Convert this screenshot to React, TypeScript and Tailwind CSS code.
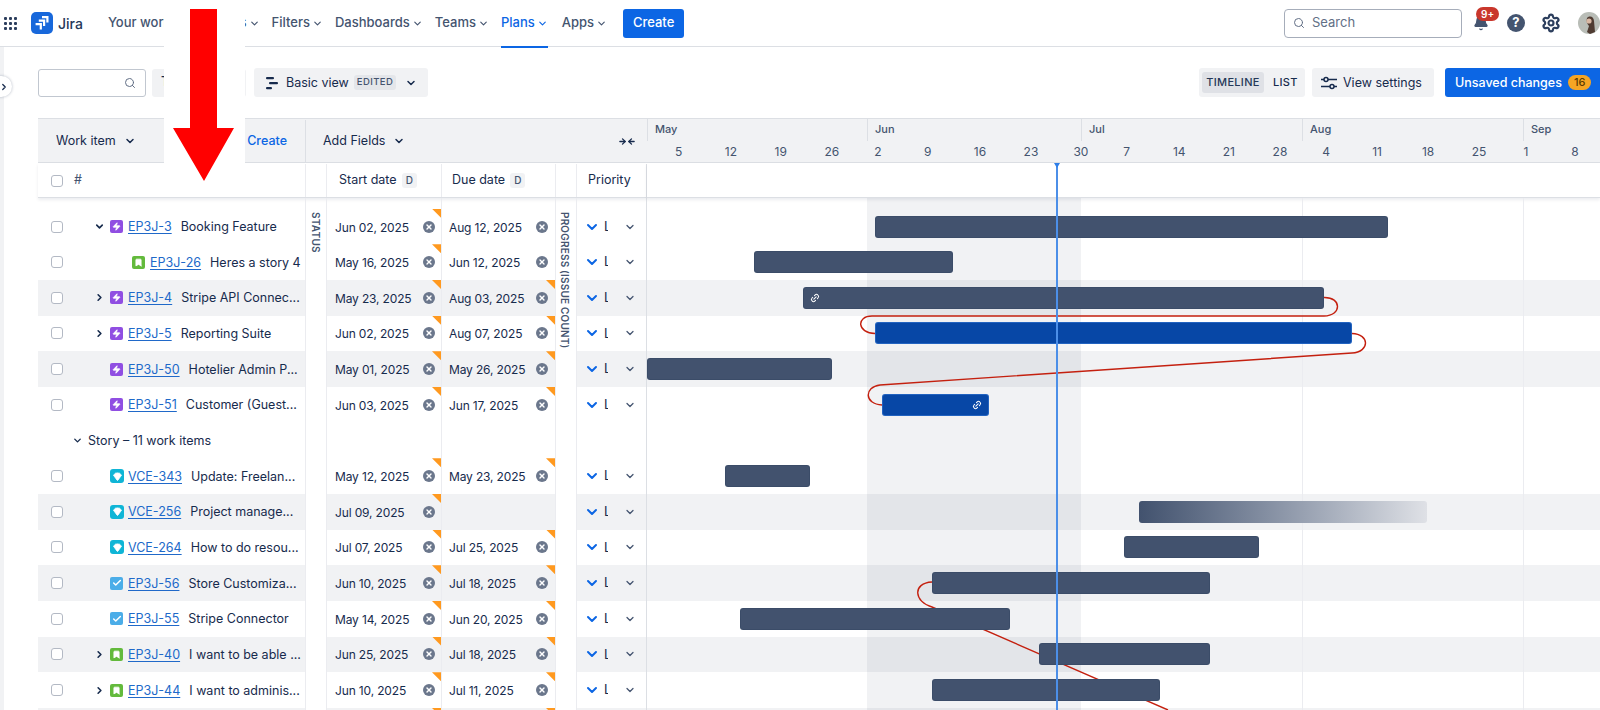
import {
  ArrowLeft,
  ArrowRight,
  Bell,
  Bookmark,
  Check,
  ChevronDown,
  ChevronRight,
  Gem,
  Link2,
  Search,
  Settings,
  X,
  Zap,
} from "lucide-react"

type Kind = "epic" | "story" | "gem" | "task"

type Row = {
  id: string
  title: string
  kind: Kind
  start: string
  due?: string
  startFlag?: boolean
  dueFlag?: boolean
  caret?: "open" | "closed"
  deep?: boolean
  band?: boolean
  bar: { left: number; width: number; tone?: "blue" | "fade"; link?: "start" | "end" }
}

const rows: Row[] = [
  { id: "EP3J-3", title: "Booking Feature", kind: "epic", start: "Jun 02, 2025", due: "Aug 12, 2025", startFlag: true, caret: "open", bar: { left: 228, width: 513 } },
  { id: "EP3J-26", title: "Heres a story 4", kind: "story", start: "May 16, 2025", due: "Jun 12, 2025", startFlag: true, deep: true, bar: { left: 107, width: 199 } },
  { id: "EP3J-4", title: "Stripe API Connec...", kind: "epic", start: "May 23, 2025", due: "Aug 03, 2025", startFlag: true, dueFlag: true, caret: "closed", band: true, bar: { left: 156, width: 521, link: "start" } },
  { id: "EP3J-5", title: "Reporting Suite", kind: "epic", start: "Jun 02, 2025", due: "Aug 07, 2025", startFlag: true, dueFlag: true, caret: "closed", bar: { left: 228, width: 477, tone: "blue" } },
  { id: "EP3J-50", title: "Hotelier Admin P...", kind: "epic", start: "May 01, 2025", due: "May 26, 2025", startFlag: true, dueFlag: true, band: true, bar: { left: 0, width: 185 } },
  { id: "EP3J-51", title: "Customer (Guest...", kind: "epic", start: "Jun 03, 2025", due: "Jun 17, 2025", startFlag: true, dueFlag: true, bar: { left: 235, width: 107, tone: "blue", link: "end" } },
]

const storyRows: Row[] = [
  { id: "VCE-343", title: "Update: Freelan...", kind: "gem", start: "May 12, 2025", due: "May 23, 2025", startFlag: true, dueFlag: true, bar: { left: 78, width: 85 } },
  { id: "VCE-256", title: "Project manage...", kind: "gem", start: "Jul 09, 2025", startFlag: true, band: true, bar: { left: 492, width: 288, tone: "fade" } },
  { id: "VCE-264", title: "How to do resou...", kind: "gem", start: "Jul 07, 2025", due: "Jul 25, 2025", startFlag: true, dueFlag: true, bar: { left: 477, width: 135 } },
  { id: "EP3J-56", title: "Store Customiza...", kind: "task", start: "Jun 10, 2025", due: "Jul 18, 2025", startFlag: true, dueFlag: true, band: true, bar: { left: 285, width: 278 } },
  { id: "EP3J-55", title: "Stripe Connector", kind: "task", start: "May 14, 2025", due: "Jun 20, 2025", startFlag: true, dueFlag: true, bar: { left: 93, width: 270 } },
  { id: "EP3J-40", title: "I want to be able ...", kind: "story", start: "Jun 25, 2025", due: "Jul 18, 2025", startFlag: true, dueFlag: true, caret: "closed", band: true, bar: { left: 392, width: 171 } },
  { id: "EP3J-44", title: "I want to adminis...", kind: "story", start: "Jun 10, 2025", due: "Jul 11, 2025", startFlag: true, dueFlag: true, caret: "closed", bar: { left: 285, width: 228 } },
]

const months = [
  { name: "May", width: "w-[220px]" },
  { name: "Jun", width: "w-[214px]" },
  { name: "Jul", width: "w-[221px]" },
  { name: "Aug", width: "w-[221px]" },
  { name: "Sep", width: "w-[77px]" },
]
const weeks = [5, 12, 19, 26, 2, 9, 16, 23, 30, 7, 14, 21, 28, 4, 11, 18, 25, 1, 8]
const nav = ["Your work", "Projects", "Filters", "Dashboards", "Teams"]

const line = "border-r border-[#ebecf0]"

function IssueIcon({ kind }: { kind: Kind }) {
  if (kind === "epic")
    return (
      <span className="flex h-[13px] w-[13px] shrink-0 items-center justify-center rounded-[2px] bg-[#904ee2]">
        <Zap size={9} className="fill-white text-white" />
      </span>
    )
  if (kind === "story")
    return (
      <span className="flex h-[13px] w-[13px] shrink-0 items-center justify-center rounded-[2px] bg-[#63ba3c]">
        <Bookmark size={9} className="fill-white text-white" />
      </span>
    )
  if (kind === "gem")
    return (
      <span className="-mr-px flex h-[14px] w-[14px] shrink-0 items-center justify-center rounded-[3px] bg-[#0fb5d6]">
        <Gem size={9} className="fill-white text-white" />
      </span>
    )
  return (
    <span className="flex h-[13px] w-[13px] shrink-0 items-center justify-center rounded-[2px] bg-[#4bade8]">
      <Check size={10} strokeWidth={3.5} className="text-white" />
    </span>
  )
}

function Flag() {
  return <span className="absolute right-0 top-0 h-[9px] w-[9px] bg-[#ff991f] [clip-path:polygon(0_0,100%_0,100%_100%)]" />
}

function Clear() {
  return (
    <span className="flex h-3 w-3 shrink-0 items-center justify-center rounded-full bg-[#6b778c]">
      <X size={8} strokeWidth={4} className="text-white" />
    </span>
  )
}

function Checkbox() {
  return <span className="h-3 w-3 shrink-0 rounded-[3px] border border-[#b3b9c4] bg-white" />
}

function DateCell({ value, flag, width, pad }: { value?: string; flag?: boolean; width: string; pad: string }) {
  return (
    <div className={`relative flex shrink-0 items-center justify-between ${width} ${pad} ${line}`}>
      {flag && <Flag />}
      {value && <span className="pt-[2px] text-[12px] tracking-[-0.15px] text-[#172b4d]">{value}</span>}
      {value && <Clear />}
    </div>
  )
}

function TableRow({ row }: { row: Row }) {
  const bg = row.band ? "bg-[#f1f2f4]" : "bg-white"
  return (
    <div className="flex h-[35.67px]">
      <div className={`flex w-[268px] shrink-0 items-center whitespace-nowrap pl-[13px] ${bg} ${line}`}>
        <Checkbox />
        <span className={`flex shrink-0 justify-end pr-[5px] ${row.deep ? "w-[69px]" : "w-[47px]"}`}>
          {row.caret === "open" && <ChevronDown size={11} strokeWidth={3.5} className="text-[#172b4d]" />}
          {row.caret === "closed" && <ChevronRight size={11} strokeWidth={3.5} className="text-[#172b4d]" />}
        </span>
        <IssueIcon kind={row.kind} />
        <a className="ml-[5px] pt-[2px] text-[12.5px] text-[#2069c9] underline underline-offset-2">{row.id}</a>
        <span className="ml-[9px] pt-[2px] text-[12.5px] text-[#172b4d]">{row.title}</span>
      </div>
      <div className={`w-[21px] shrink-0 bg-white ${line}`} />
      <div className={`flex shrink-0 ${bg}`}>
        <DateCell value={row.start} flag={row.startFlag} width="w-[115px]" pad="pl-[8px] pr-[6px]" />
        <DateCell value={row.due} flag={row.dueFlag} width="w-[114px]" pad="pl-[7px] pr-[7px]" />
      </div>
      <div className={`w-[21px] shrink-0 bg-white ${line}`} />
      <PriorityCell bg={bg} />
    </div>
  )
}

function PriorityCell({ bg }: { bg: string }) {
  return (
    <div className={`flex w-[70px] shrink-0 items-center border-r border-[#dcdfe4] pl-[7px] ${bg}`}>
      <ChevronDown size={16} strokeWidth={3} className="text-[#0c66e4]" />
      <span className="ml-[4px] w-[4px] overflow-hidden text-[13px] text-[#172b4d]">L</span>
      <ChevronDown size={12} strokeWidth={2.5} className="ml-[16px] text-[#44546f]" />
    </div>
  )
}

function EmptyCols() {
  return (
    <>
      <div className={`w-[21px] shrink-0 ${line}`} />
      <div className={`w-[115px] shrink-0 ${line}`} />
      <div className={`w-[114px] shrink-0 ${line}`} />
      <div className={`w-[21px] shrink-0 ${line}`} />
      <div className="w-[70px] shrink-0 border-r border-[#dcdfe4]" />
    </>
  )
}

function GroupRow() {
  return (
    <div className="flex h-[35.67px]">
      <div className={`flex w-[268px] shrink-0 items-center pl-[34px] ${line}`}>
        <ChevronDown size={11} strokeWidth={3} className="text-[#172b4d]" />
        <span className="ml-[5px] pt-[2px] text-[12.5px] text-[#172b4d]">Story – 11 work items</span>
      </div>
      <EmptyCols />
    </div>
  )
}

function Spacer() {
  return (
    <div className="flex h-[10.7px]">
      <div className={`w-[268px] shrink-0 ${line}`} />
      <EmptyCols />
    </div>
  )
}

function Bar({ bar }: { bar: Row["bar"] }) {
  const tone =
    bar.tone === "blue"
      ? "border bg-[#0747a6] border-[#4c8fe8]/40"
      : bar.tone === "fade"
        ? "bg-gradient-to-r from-[#42526e] to-[#dfe1e6]"
        : "border bg-[#42526e] border-[#2c3e5d]/30"
  return (
    <div
      className={`relative z-20 flex h-[22px] items-center rounded-[3px] px-[6px] ${tone} ${bar.link === "end" ? "justify-end" : ""}`}
      style={{ marginLeft: bar.left, width: bar.width }}
    >
      {bar.link && <Link2 size={10} strokeWidth={2.5} className="-rotate-45 text-white" />}
    </div>
  )
}

function Timeline() {
  const all = [...rows, null, ...storyRows, "end" as const]
  return (
    <div className="relative min-w-0 flex-1">
      <div className="h-[45px] border-b border-t border-[#dcdfe4] bg-[#f1f2f4]">
        <div className="flex h-[24px]">
          {months.map((m) => (
            <div key={m.name} className={`h-[22px] shrink-0 border-l border-[#dcdfe4] pl-[7px] pt-[2px] text-[11px] font-medium text-[#44546f] ${m.width}`}>
              {m.name}
            </div>
          ))}
        </div>
        <div className="flex pl-[28px] text-[12px] text-[#44546f]">
          {weeks.map((w, i) => (
            <span key={i} className={`w-[49.8px] shrink-0 ${w === 1 ? "pl-[2px]" : ""}`}>{w}</span>
          ))}
        </div>
      </div>
      <div className="h-[35px] border-b border-[#dcdfe4] bg-white shadow-[0_2px_3px_rgba(9,30,66,0.08)]" />
      <div className="relative pt-[10.7px]">
        {/* current month + month boundaries */}
        <div className="absolute inset-y-0 left-[220px] w-[214px] bg-[#091e42]/[0.06]" />
        <div className="absolute inset-y-0 left-[655px] w-px bg-[#ebecf0]" />
        <div className="absolute inset-y-0 left-[876px] w-px bg-[#ebecf0]" />
        <svg className="absolute left-0 top-0 z-10 h-[512px] w-[953px]" viewBox="647 198 953 512" fill="none" stroke="#c4200f" strokeWidth="1.4">
          <path d="M1324 297.5 C1342 297 1342 316 1324 316 L872 316 C856 316 857 333 875 333.5" />
          <path d="M1352 333.5 C1370 334 1370 352 1352 353 L880 385 C864 387 864 404 882 405" />
          <path d="M932 582 C912 583 914 602 932 607 L1168 710" />
        </svg>
        {all.map((r, i) =>
          r && r !== "end" ? (
            <div key={r.id} className={`flex h-[35.67px] items-center ${r.band ? "bg-[#f1f2f4]" : ""}`}>
              <Bar bar={r.bar} />
            </div>
          ) : (
            <div key={i} className={`h-[35.67px] ${r === "end" ? "bg-[#f1f2f4]" : ""}`} />
          ),
        )}
      </div>
      <div className="absolute bottom-0 left-[409px] top-[45px] z-30 w-[2px] bg-[#4c8fe8]" />
      <div className="absolute left-[407px] top-[45px] z-30 h-0 w-0 border-x-[3px] border-t-[5px] border-x-transparent border-t-[#2f7fe8]" />
    </div>
  )
}

function DateBadge() {
  return <span className="ml-[5px] rounded-[3px] bg-[#f1f2f4] px-[4px] text-[10px] font-medium text-[#44546f]">D</span>
}

function Table() {
  return (
    <div className="flex">
      <div className="relative w-[609px] shrink-0">
        <div className="flex h-[45px] items-center border-b border-t border-[#dcdfe4] bg-[#f1f2f4] pt-px text-[12.5px] text-[#172b4d]">
          <div className="flex h-full w-[268px] shrink-0 items-center border-r border-[#dcdfe4] pl-[18px]">
            <span>Work item</span>
            <ChevronDown size={12} strokeWidth={3} className="ml-[8px]" />
            <span className="ml-auto mr-[18px] font-medium text-[#0c66e4]">Create</span>
          </div>
          <div className="flex items-center pl-[17px]">
            <span>Add Fields</span>
            <ChevronDown size={12} strokeWidth={3} className="ml-[8px]" />
          </div>
          <div className="ml-auto mr-[11px] flex items-center">
            <ArrowRight size={9} strokeWidth={3.5} />
            <ArrowLeft size={9} strokeWidth={3.5} />
          </div>
        </div>
        <div className="flex h-[35px] border-b border-[#dcdfe4] bg-white pt-px text-[12.5px] text-[#172b4d] shadow-[0_2px_3px_rgba(9,30,66,0.08)]">
          <div className={`flex w-[268px] shrink-0 items-center pl-[13px] ${line}`}>
            <Checkbox />
            <span className="ml-[11px] text-[#44546f]">#</span>
          </div>
          <div className={`w-[21px] shrink-0 ${line}`} />
          <div className={`flex w-[115px] shrink-0 items-center pl-[12px] ${line}`}>
            Start date
            <DateBadge />
          </div>
          <div className={`flex w-[114px] shrink-0 items-center pl-[10px] ${line}`}>
            Due date
            <DateBadge />
          </div>
          <div className={`w-[21px] shrink-0 ${line}`} />
          <div className="flex w-[70px] shrink-0 items-center border-r border-[#dcdfe4] pl-[11px]">Priority</div>
        </div>
        <Spacer />
        {rows.map((r) => (
          <TableRow key={r.id} row={r} />
        ))}
        <GroupRow />
        {storyRows.map((r) => (
          <TableRow key={r.id} row={r} />
        ))}
        <TableRow row={{ ...storyRows[0], id: "", title: "", band: true, start: "", due: "", caret: undefined }} />
        <span className="absolute left-[270px] top-[94px] z-10 text-[10px] font-semibold tracking-[0.3px] text-[#44546f] [writing-mode:vertical-rl]">STATUS</span>
        <span className="absolute left-[519px] top-[94px] z-10 whitespace-nowrap text-[10px] font-semibold tracking-[0.2px] text-[#44546f] [writing-mode:vertical-rl]">PROGRESS (ISSUE COUNT)</span>
      </div>
      <Timeline />
    </div>
  )
}

function TopBar() {
  return (
    <header className="flex h-[47px] items-center border-b border-[#dcdfe4] bg-white text-[13px] font-medium text-[#44546f]">
      <div className="ml-[4px] grid grid-cols-3 gap-[2px]">
        {Array.from({ length: 9 }).map((_, i) => (
          <span key={i} className="h-[3px] w-[3px] rounded-[1px] bg-[#2c3e5d]" />
        ))}
      </div>
      <svg className="ml-[14px] shrink-0" width="22" height="22" viewBox="0 0 22 22">
        <rect width="22" height="22" rx="5" fill="#1868db" />
        <path d="M11 4h6.5v6.5h-2.2V6.2H11z M7.8 7.5h6.4v6.4H12V9.7H7.8z M4.6 11h6.3v6.4H8.7v-4.2H4.6z" fill="#fff" />
      </svg>
      <span className="ml-[5px] text-[14px] text-[#253858]">Jira</span>
      <nav className="ml-[25px] flex items-center gap-[12px]">
        {nav.map((n) => (
          <span key={n} className="flex items-center gap-[2px]">
            {n}
            <ChevronDown size={11} strokeWidth={2.5} />
          </span>
        ))}
        <span className="relative mr-[2px] flex h-[47px] items-center gap-[2px] text-[#0c66e4]">
          Plans
          <ChevronDown size={11} strokeWidth={2.5} />
          <span className="absolute -bottom-px left-0 right-0 h-[2px] bg-[#0c66e4]" />
        </span>
        <span className="flex items-center gap-[2px]">
          Apps
          <ChevronDown size={11} strokeWidth={2.5} />
        </span>
      </nav>
      <button className="ml-[16px] h-[29px] w-[61px] rounded-[3px] bg-[#0c66e4] text-[13px] font-medium text-white">Create</button>
      <div className="ml-auto flex h-[29px] w-[178px] items-center gap-[7px] rounded-[4px] border border-[#a6adba] pl-[8px] text-[13px] font-normal text-[#626f86]">
        <Search size={12} strokeWidth={2} />
        Search
      </div>
      <div className="relative ml-[12px] w-[24px]">
        <Bell size={16} className="ml-[-1px] fill-[#44546f] text-[#44546f]" />
        <span className="absolute -top-[8px] left-[2px] rounded-full bg-[#c9372c] px-[5px] text-[10px] font-semibold leading-[14px] text-white">9+</span>
      </div>
      <span className="ml-[9px] flex h-[18px] w-[18px] items-center justify-center rounded-full bg-[#44546f] text-[13px] font-bold text-white">?</span>
      <Settings size={20} strokeWidth={2.6} className="ml-[16px] text-[#2c3e5d]" />
      <svg className="ml-[17px] shrink-0" width="22" height="22" viewBox="0 0 22 22">
        <circle cx="11" cy="11" r="11" fill="#b9bdb7" />
        <path d="M9 6c3-3 7-1 7 3l1 11-5 2-3-2 2-6c-2-2-3-5-2-8z" fill="#4f3b32" />
        <circle cx="11" cy="9" r="2.6" fill="#d9b8a4" />
      </svg>
    </header>
  )
}

function Toolbar() {
  return (
    <div className="flex h-[71px] items-center pl-[34px] text-[12.5px] text-[#172b4d]">
      <div className="flex h-[28px] w-[108px] items-center justify-end rounded-[3px] border border-[#c1c7d0] pr-[9px] text-[#626f86]">
        <Search size={12} />
      </div>
      <div className="ml-[6px] flex h-[28px] w-[94px] items-center rounded-[3px] bg-[#f1f2f4] pl-[9px] font-medium">T</div>
      <div className="ml-[8px] flex h-[29px] w-[174px] items-center rounded-[3px] bg-[#f1f2f4] pl-[11px]">
        <svg width="14" height="14" viewBox="0 0 14 14" fill="#172b4d">
          <rect x="1" y="1" width="8" height="2.2" rx="1" />
          <rect x="4" y="6" width="9" height="2.2" rx="1" />
          <rect x="1" y="11" width="6" height="2.2" rx="1" />
        </svg>
        <span className="ml-[7px] pt-px">Basic view</span>
        <span className="ml-[5px] rounded-[3px] bg-[#e4e6ea] px-[3px] text-[9.5px] font-medium tracking-[0.4px] text-[#44546f]">EDITED</span>
        <ChevronDown size={12} strokeWidth={3} className="ml-[9px]" />
      </div>
      <div className="ml-auto flex h-[29px] w-[106px] items-center rounded-[3px] bg-[#f1f2f4] pl-[3px] text-[11px] font-medium tracking-[0.3px]">
        <span className="flex h-[21px] w-[62px] items-center justify-center rounded-[3px] bg-[#dfe1e6] text-[#253858]">TIMELINE</span>
        <span className="ml-[9px]">LIST</span>
      </div>
      <div className="ml-[7px] flex h-[29px] w-[122px] items-center rounded-[3px] bg-[#f1f2f4] pl-[9px]">
        <svg width="16" height="14" viewBox="0 0 16 14" fill="none" stroke="#172b4d" strokeWidth="1.5">
          <path d="M0 3.5h3M7 3.5h9M0 10.5h9M13 10.5h3" />
          <circle cx="5" cy="3.5" r="2" />
          <circle cx="11" cy="10.5" r="2" />
        </svg>
        <span className="ml-[6px] pt-px">View settings</span>
      </div>
      <div className="ml-[11px] flex h-[29px] w-[155px] items-center rounded-l-[3px] bg-[#0c66e4] pl-[10px] font-medium text-white">
        <span className="pt-px">Unsaved changes</span>
        <span className="ml-[6px] rounded-full bg-[#f5a524] px-[6px] text-[11px] leading-[15px] text-[#5c3a00]">16</span>
      </div>
    </div>
  )
}

export default function App() {
  return (
    <div className="relative h-[710px] w-[1600px] overflow-hidden bg-white font-['Inter','Liberation_Sans',sans-serif]">
      <TopBar />
      <div className="flex">
        <div className="h-[663px] w-1 shrink-0 bg-[#f1f2f4]" />
        <div className="relative min-w-0 flex-1">
          <Toolbar />
          <div className="pl-[34px]">
            <Table />
          </div>
        </div>
      </div>

      <div className="absolute left-[-9px] top-[76px] z-30 flex h-[21px] w-[21px] items-center justify-end rounded-full bg-white pr-[3px] shadow-[0_0_3px_rgba(9,30,66,0.3)]">
        <ChevronRight size={10} strokeWidth={3} className="text-[#172b4d]" />
      </div>

      {/* white patch + red arrow that were painted over the screenshot */}
      <div className="absolute left-[164px] top-0 z-40 h-[163px] w-[81px] bg-white" />
      <svg className="absolute left-[170px] top-[6px] z-50" width="68" height="178" viewBox="170 6 68 178">
        <polygon points="190,9 217,9 217,128 234,128 204,181 173,128 190,128" fill="#ff0000" />
      </svg>
    </div>
  )
}
